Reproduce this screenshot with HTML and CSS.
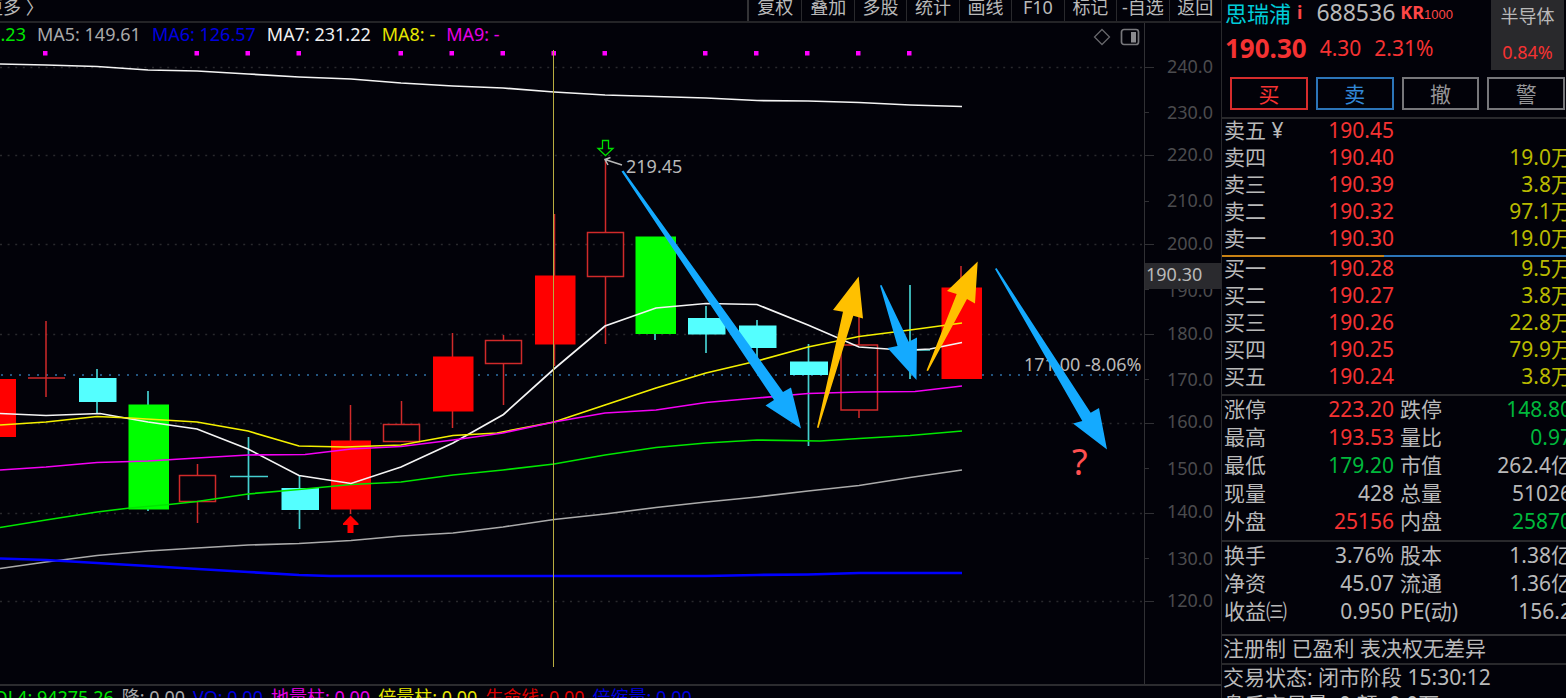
FILE: index.html
```html
<!DOCTYPE html>
<html lang="zh-CN">
<head>
<meta charset="utf-8">
<title>思瑞浦 688536</title>
<link rel="stylesheet" href="styles.css">
</head>
<body>
<main class="terminal">
  <section class="left">
    <nav class="toolbar">
      <button class="more">更多 〉</button>
      <div class="tools">
        <button>复权</button><button>叠加</button><button>多股</button><button>统计</button><button>画线</button><button>F10</button><button>标记</button><button>-自选</button><button>返回</button>
      </div>
    </nav>
    <div class="legend-row">
      <div class="legend">
        <span class="lime">MA4: 158.23</span><span class="grey">MA5: 149.61</span><span class="blue">MA6: 126.57</span><span class="white">MA7: 231.22</span><span class="yellow">MA8: -</span><span class="magenta">MA9: -</span>
      </div>
      <div class="chart-icons">
        <svg width="18" height="18" viewBox="0 0 18 18"><path d="M9 1.500L16.500 9L9 16.500L1.500 9Z" fill="none" stroke="#66666a" stroke-width="1.300"/></svg>
        <svg width="20" height="18" viewBox="0 0 20 18"><rect x="1.500" y="1.500" width="17" height="15" rx="2.500" fill="none" stroke="#77777b" stroke-width="1.700"/><rect x="11" y="4" width="5" height="10.500" fill="#8a8a8e"/></svg>
      </div>
      <div class="axis-head"></div>
    </div>
    <svg class="chart" viewBox="0 50 1221 634">
      <g stroke="#29292d" stroke-width="1.500" stroke-dasharray="2 5.600">
        <path d="M0 67.500H1144M0 155.500H1144M0 244.500H1144M0 334.500H1144M0 423.500H1144M0 513.500H1144M0 601.500H1144"/>
      </g>
      <path d="M1 375H1144" stroke="#23557f" stroke-width="2" stroke-dasharray="2 7"/>
      <g stroke="#303034" fill="none">
        <path d="M1144.500 50V684"/>
        <path d="M1145 67.500H1154M1145 112.500H1149M1145 155.500H1154M1145 201.500H1149M1145 244.500H1154M1145 289.500H1149M1145 334.500H1154M1145 379.500H1149M1145 423.500H1154M1145 468.500H1149M1145 513.500H1154M1145 558.500H1149M1145 601.500H1154"/>
      </g>
      <g class="axis-text" text-anchor="end">
        <text x="1213" y="73">240.0</text><text x="1213" y="119">230.0</text><text x="1213" y="161">220.0</text><text x="1213" y="207">210.0</text><text x="1213" y="250">200.0</text><text x="1213" y="297">190.0</text><text x="1213" y="340">180.0</text><text x="1213" y="386">170.0</text><text x="1213" y="428">160.0</text><text x="1213" y="475">150.0</text><text x="1213" y="518">140.0</text><text x="1213" y="565">130.0</text><text x="1213" y="607">120.0</text>
      </g>
      <rect x="1145" y="263" width="76" height="26" fill="#2a2a2e"/>
      <text class="label" x="1146" y="281">190.30</text>

      <g fill="#ff00ff">
        <path d="M43 51h4.500v4.500h-4.500zM194.500 51h4.500v4.500h-4.500zM245.500 51h4.500v4.500h-4.500zM296.500 51h4.500v4.500h-4.500zM398.500 51h4.500v4.500h-4.500zM449.500 51h4.500v4.500h-4.500zM500.500 51h4.500v4.500h-4.500zM551.500 51h4.500v4.500h-4.500zM602.500 51h4.500v4.500h-4.500zM703 51h4.500v4.500h-4.500zM754 51h4.500v4.500h-4.500zM805 51h4.500v4.500h-4.500zM856 51h4.500v4.500h-4.500zM907 51h4.500v4.500h-4.500z"/>
      </g>

      <g stroke="#d02a2a" stroke-width="1.500" fill="none">
        <path d="M46 321V397M28 378H65M197.500 464V475M197.500 502V523M350.500 405V514M401.500 401V424M452.500 333V428M503.500 335V340M503.500 364V405M554.500 214V366M605.500 160V232M605.500 277V344M859 310V345M859 410V418M961 266V290"/>
        <rect x="179.500" y="475.500" width="36" height="26"/>
        <rect x="383.500" y="424.500" width="36" height="17"/>
        <rect x="485.500" y="340.500" width="36" height="23"/>
        <rect x="587.500" y="232.500" width="36" height="44"/>
        <rect x="841" y="345" width="36.500" height="65"/>
      </g>
      <path d="M97 369V413M148 391V511M248.500 437V500M230 476.500H268M299.500 476V529M655 333V340M706 306V353M757 320V362M808.500 344V446M910 285V379M891 350H930" stroke="#45cfd0" stroke-width="1.700" fill="none"/>
      <path d="M0 379H16V437H0zM331 440.500H371V509.500H331zM433 356.500H473.500V411.500H433zM535 275.500H575.500V344.500H535zM941.500 287.500H982V379H941.500z" fill="#ff0000"/>
      <path d="M128.500 404.500H169V509.500H128.500zM635.500 236.500H676V334H635.500z" fill="#00ff00"/>
      <path d="M79 378H116.500V402H79zM281.500 488H319V510H281.500zM688 318H725.500V334.500H688zM739 325.500H776.500V348H739zM790 361.500H828V375H790z" fill="#54ffff"/>

      <g fill="none" stroke-width="1.700">
        <polyline stroke="#f4f4f4" points="0,64 46,65 97,66.500 148,70 197,71 248,74 299,77 351,79 401,83 453,86 503,88 554,92 605,95 656,96.500 706,98 757,100.500 808,101 859,102.500 910,105 962,106.500"/>
        <polyline stroke="#00e600" points="0,527.500 46,520 97,512 130,508 169,504.500 197,501.500 248,494 299,489.500 351,484.500 401,482 453,475 503,470 554,464 605,455 656,447.500 706,443 757,440 820,441 859,438.500 910,435.500 962,431"/>
        <polyline stroke="#aaa" points="0,568.500 46,562 97,555.500 148,551 197,548 248,545 299,543.500 351,540.500 401,536 453,533 503,527 554,519.500 605,514 656,507.500 706,502 757,497 808,491 859,485.500 910,477.500 962,470"/>
        <polyline stroke="#0000ff" stroke-width="2.700" points="0,558.500 46,560 97,563 148,566 248,572 299,575 330,576 706,576 757,575 808,574.500 859,573 962,573"/>
        <polyline stroke="#f4f4f4" points="0,413.500 46,415.500 100,413.500 148,422 197,429 248,449 299,475.500 351,483.500 401,467 453,443 503.500,414.500 554,369 605,326 656,308 706,303.500 757,304.500 808,325 859,347 895,349.500 910,350 930,349 962,342.500"/>
        <polyline stroke="#f4f000" points="0,425 46,422 97,416.500 130,418 197,422 248,431 299,446 345,447 401,445 453,435.500 497,433 554,422 605,405 656,388 706,373 757,361 808,347 859,336.500 910,330 962,323"/>
        <polyline stroke="#f400f4" points="0,470 46,467 97,462.500 148,461 197,458 248,455 305,454.500 351,449 401,446.500 453,440 503,433 554,422 605,413 656,410 706,402.500 757,398 808,393.500 859,392 915,391.500 962,386"/>
      </g>
      <path d="M553.500 50V667" stroke="#b8ac40" stroke-width="1"/>

      <path d="M350.500 515.500L358.500 523.500V525H353.500V533H347.500V525H343V523.500Z" fill="#ff0000"/>
      <path d="M602.500 140.500H608.500V148.500H613L605.500 155.500L598 148.500H602.500Z" fill="none" stroke="#00dc00" stroke-width="1.300"/>
      <path d="M622 165L605 159.500M610.500 157.500L605 159.500L608 165" fill="none" stroke="#b8b8b8" stroke-width="1.500"/>
      <text class="label" x="626" y="173">219.45</text>
      <text class="label" x="1024" y="371">171.00 -8.06%</text>

      <g fill="#14aaff">
        <path d="M621.500 171.500L623.500 170.500L783 392L791 387.500L801 428.500L765.500 405.500L774 400Z"/>
        <path d="M880 285.500L881.500 285L908.700 341.700L917 337.500L916.500 380L887.500 348L897.500 346Z"/>
        <path d="M995 269L996.500 268L1090.700 412.700L1099 408L1107 449.500L1073 423.500L1082.300 421Z"/>
      </g>
      <g fill="#ffc000">
        <path d="M817 427.500L818.500 428L853.300 315.700L863 318.500L858.700 276.500L833 310L843 311.700Z"/>
        <path d="M926.500 370.500L928 371L967 299L975 303.500L977.700 261.500L947 291L956.700 294Z"/>
      </g>
      <text class="question" x="1072" y="475">?</text>
    </svg>
    <div class="legend volume">
      <span class="lime">VOL4: 94275.26</span><span class="grey">降: 0.00</span><span class="blue">VO: 0.00</span><span class="magenta">地量柱: 0.00</span><span class="yellow">倍量柱: 0.00</span><span class="red">生命线: 0.00</span><span class="blue">倍缩量: 0.00</span>
    </div>
  </section>

  <aside class="panel">
    <header class="quote">
      <div class="quote-main">
        <div class="name-row"><span class="name">思瑞浦</span><b class="info">i</b><span class="code">688536</span><span class="tag"><b>KR</b>1000</span></div>
        <div class="price-row"><b class="price">190.30</b><span>4.30</span><span>2.31%</span></div>
      </div>
      <div class="sector"><span>半导体</span><span class="up">0.84%</span></div>
    </header>
    <div class="actions">
      <button class="buy">买</button><button class="sell">卖</button><button>撤</button><button>警</button>
    </div>
    <table class="book asks">
      <tr><th>卖五 ¥</th><td>190.45</td><td></td></tr>
      <tr><th>卖四</th><td>190.40</td><td>19.0万</td></tr>
      <tr><th>卖三</th><td>190.39</td><td>3.8万</td></tr>
      <tr><th>卖二</th><td>190.32</td><td>97.1万</td></tr>
      <tr><th>卖一</th><td>190.30</td><td>19.0万</td></tr>
    </table>
    <div class="ratio"></div>
    <table class="book bids">
      <tr><th>买一</th><td>190.28</td><td>9.5万</td></tr>
      <tr><th>买二</th><td>190.27</td><td>3.8万</td></tr>
      <tr><th>买三</th><td>190.26</td><td>22.8万</td></tr>
      <tr><th>买四</th><td>190.25</td><td>79.9万</td></tr>
      <tr><th>买五</th><td>190.24</td><td>3.8万</td></tr>
    </table>
    <div class="block trade">
      <table class="stats">
        <tr><th>涨停</th><td class="up">223.20</td><th>跌停</th><td class="down">148.80</td></tr>
        <tr><th>最高</th><td class="up">193.53</td><th>量比</th><td class="down">0.97</td></tr>
        <tr><th>最低</th><td class="down">179.20</td><th>市值</th><td>262.4亿</td></tr>
        <tr><th>现量</th><td>428</td><th>总量</th><td>51026</td></tr>
        <tr><th>外盘</th><td class="up">25156</td><th>内盘</th><td class="down">25870</td></tr>
      </table>
    </div>
    <div class="block finance">
      <table class="stats">
        <tr><th>换手</th><td>3.76%</td><th>股本</th><td>1.38亿</td></tr>
        <tr><th>净资</th><td>45.07</td><th>流通</th><td>1.36亿</td></tr>
        <tr><th>收益㈢</th><td>0.950</td><th>PE(动)</th><td>156.2</td></tr>
      </table>
    </div>
    <p class="note heavy">注册制 已盈利 表决权无差异</p>
    <p class="note">交易状态: 闭市阶段 15:30:12</p>
    <p class="note plain">盘后交易量: 0 额: 0.0万</p>
  </aside>
</main>
</body>
</html>
```
FILE: styles.css
```css
* { box-sizing: border-box; }

body {
  margin: 0;
  background: #020209;
  color: #b9b9b9;
  font-family: "Noto Sans", "Noto Sans CJK SC", sans-serif;
  font-size: 18px;
  overflow: hidden;
}

button {
  padding: 0;
  border: 0;
  background: none;
  color: inherit;
  font: inherit;
  cursor: pointer;
}

.terminal {
  display: flex;
  height: 100vh;
  overflow: hidden;
}

.left {
  flex: 1;
  min-width: 0;
  overflow: hidden;
}

.toolbar {
  display: flex;
  justify-content: space-between;
  height: 23px;
  border-bottom: 2px solid #242427;
}

.toolbar button {
  height: 21px;
  line-height: 14px;
  padding-bottom: 7px;
  white-space: nowrap;
}

.toolbar .more { margin-left: -15px; }

.tools {
  display: grid;
  grid-template-columns: repeat(9, 1fr);
  width: 474px;
  border-left: 2px solid #333336;
}

.tools button + button { border-left: 1px solid #29292d; }

.legend-row {
  display: flex;
  height: 27px;
}

.legend {
  display: flex;
  flex: 1;
  gap: 11px;
  margin-left: -78px;
  line-height: 23px;
  white-space: nowrap;
}

.chart-icons {
  display: flex;
  align-items: center;
  gap: 9px;
  padding-right: 4px;
}

.axis-head {
  width: 77px;
  border-left: 1px solid #303034;
}

.chart {
  display: block;
  width: 100%;
  height: auto;
}

.axis-text {
  fill: #4b4b4e;
  font-size: 18px;
}

.label {
  fill: #b9b9b9;
  font-size: 18px;
}

.question {
  fill: #ff5050;
  font-size: 36px;
}

.volume {
  gap: 8px;
  margin-left: -17px;
  border-top: 2px solid #2c2c2f;
}

.lime { color: #00e600; }
.grey { color: #a9a9a9; }
.blue { color: #0000e0; }
.white { color: #f0f0f0; }
.yellow { color: #e6e600; }
.magenta { color: #e600e6; }
.red { color: #dc0000; }
.up { color: #f53232; }
.down { color: #00b83c; }

.panel {
  flex: none;
  width: 345px;
  overflow: hidden;
  border-left: 1px solid #29292c;
  font-size: 21px;
}

.quote {
  display: flex;
  justify-content: space-between;
  height: 77px;
  padding: 0 2px 0 3px;
}

.name-row {
  display: flex;
  align-items: center;
  height: 23px;
  white-space: nowrap;
}

.name {
  color: #00cbd8;
  font-size: 22px;
}

.info {
  margin-left: 6px;
  color: #ff4646;
  font-size: 18px;
}

.code {
  margin-left: 14px;
  font-size: 23px;
}

.tag {
  margin-left: 5px;
  color: #ff4646;
  font: 13px "Liberation Sans", sans-serif;
}

.tag b { font: bold 18px "Noto Sans", sans-serif; }

.price-row {
  display: flex;
  align-items: center;
  gap: 13px;
  height: 50px;
  color: #f53232;
}

.price { font-size: 26px; }

.sector {
  display: flex;
  flex-direction: column;
  align-items: center;
  gap: 12px;
  width: 73px;
  height: 70px;
  padding-top: 4px;
  background: #29292c;
  font-size: 18px;
  line-height: 24px;
}

.actions {
  display: grid;
  grid-template-columns: repeat(4, 1fr);
  gap: 8px;
  padding: 0 1px 7px 8px;
  border-bottom: 2px solid #29292c;
}

.actions button {
  height: 33px;
  border: 2px solid #77777a;
  color: #959598;
  line-height: 28px;
}

.actions .buy {
  border-color: #d62c2c;
  color: #f53232;
}

.actions .sell {
  border-color: #2c75b8;
  color: #3288d6;
}

table {
  width: 350px;
  border-collapse: collapse;
  table-layout: fixed;
}

th,
td {
  padding: 0;
  font-weight: normal;
  vertical-align: top;
  white-space: nowrap;
}

th {
  width: 76px;
  padding-left: 2px;
  text-align: left;
}

td { text-align: right; }

.book tr { height: 27px; }

.book th,
.book td { line-height: 23px; }

.book td:nth-child(2) {
  width: 96px;
  color: #f53232;
}

.book td:nth-child(3) { color: #b9b900; }

.asks { margin-bottom: 1px; }

.ratio {
  height: 2px;
  background: linear-gradient(to right, #c88214 0 47%, #2c75b8 47%);
}

.bids { margin-bottom: 2px; }

.block { border-top: 2px solid #29292c; }
.trade { padding-bottom: 4px; }
.finance { padding-bottom: 8px; }

.stats tr { height: 28px; }

.stats th,
.stats td { line-height: 26px; }

.stats td:nth-child(2) { width: 96px; }

.stats th:nth-child(3) { padding-left: 6px; }

.note {
  margin: 0;
  padding: 0 0 2px 1px;
  border-top: 2px solid #29292c;
  line-height: 25px;
  white-space: nowrap;
}

.note.heavy { border-top-color: #333336; }

.note.plain { border-top: 0; }
```
